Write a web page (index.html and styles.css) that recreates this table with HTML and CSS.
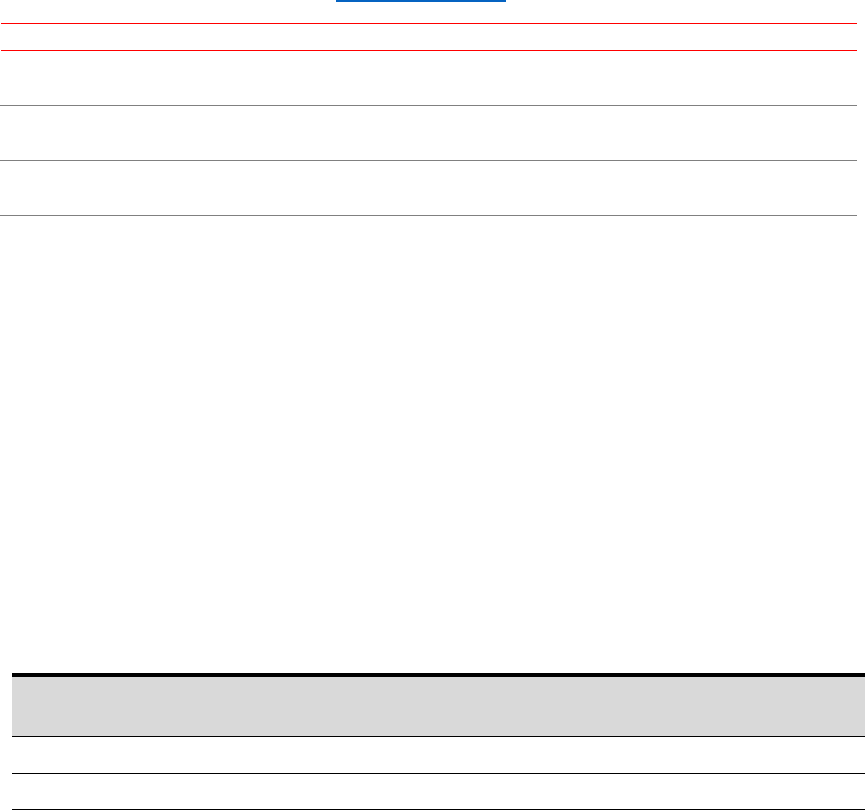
FILE: index.html
```html
<!DOCTYPE html>
<html lang="en">

<head>
    <meta charset="UTF-8">
    <meta name="viewport" content="width=device-width, initial-scale=1.0">
    <title>Document</title>
    <link rel="stylesheet" href="styles.css">
</head>

<body>
    <div class="page">
        <div class="top">
            <a class="top-link" href="#"></a>
        </div>
        <div class="red-block"></div>
        <div class="rows">
            <div class="row"></div>
            <div class="row"></div>
            <div class="row"></div>
        </div>
        <table class="data-table">
            <thead>
                <tr>
                    <th></th>
                </tr>
            </thead>
            <tbody>
                <tr class="first">
                    <td></td>
                </tr>
                <tr class="second">
                    <td></td>
                </tr>
            </tbody>
        </table>
    </div>
</body>

</html>
```

FILE: styles.css
```css
body {
    margin: 0;
    font-family: 'Liberation Sans', Arial, sans-serif;
    background-color: #ffffff;
    overflow: hidden;
}

.page {
    display: flex;
    flex-direction: column;
    width: 865px;
}

.top {
    display: flex;
    padding-left: 336px;
}

.top-link {
    display: block;
    width: 170px;
    height: 0;
    border-bottom: 2px solid #0563c1;
}

.red-block {
    width: 856px;
    height: 26px;
    margin-top: 21px;
    margin-left: 1px;
    border-top: 1px solid #ff0000;
    border-bottom: 1px solid #ff0000;
}

.rows {
    display: flex;
    flex-direction: column;
    width: 857px;
}

.row {
    height: 54px;
    border-bottom: 1px solid #808080;
}

.data-table {
    width: 853px;
    margin-top: 457px;
    margin-left: 12px;
    border-collapse: collapse;
    border-top: 4px solid #000000;
}

.data-table th {
    height: 59px;
    padding: 0;
    background-color: #d9d9d9;
    border-bottom: 1px solid #000000;
}

.data-table td {
    padding: 0;
    border-bottom: 1px solid #000000;
}

.data-table .first td {
    height: 36px;
}

.data-table .second td {
    height: 35px;
}
```
